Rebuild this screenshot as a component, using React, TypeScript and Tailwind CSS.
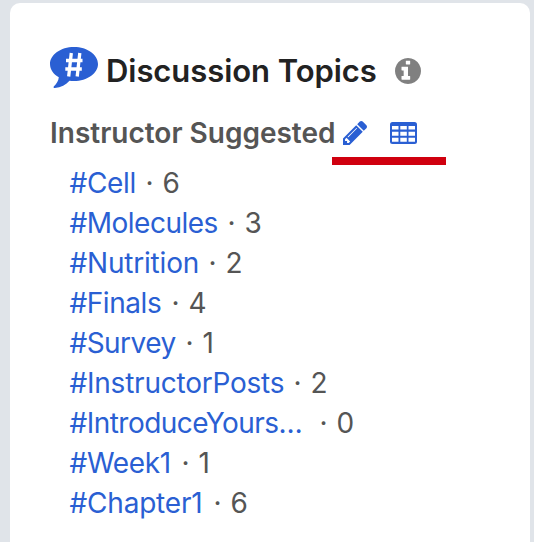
import * as React from "react";

const TOPICS = [
  { tag: "#Cell", count: 6, size: "w-[67px] tracking-[-0.3px]" },
  { tag: "#Molecules", count: 3, size: "w-[149px] tracking-[-0.5px]" },
  { tag: "#Nutrition", count: 2, size: "w-[130px] tracking-[-0.2px]" },
  { tag: "#Finals", count: 4, size: "w-[93px] tracking-[-0.45px]" },
  { tag: "#Survey", count: 1, size: "w-[107px] tracking-[-0.55px]" },
  { tag: "#InstructorPosts", count: 2, size: "w-[215px] tracking-[-0.23px]" },
  { tag: "#IntroduceYours…", count: 0, size: "w-[241px] tracking-[-0.53px]" },
  { tag: "#Week1", count: 1, size: "w-[103px] tracking-[-0.35px]" },
  { tag: "#Chapter1", count: 6, size: "w-[135px] tracking-[-0.2px]" },
];

function HashBubble() {
  return (
    <svg width="48" height="42" viewBox="0 0 48 42" className="shrink-0">
      <path
        fill="#2a5fd3"
        d="M24 0C10.700 0 0 7.600 0 17c0 5.400 3.400 10.200 8.800 13.300C8.500 33.500 6.700 36.700 4 39.200c-.8.800-.4 1.900.8 1.800C11 40.200 16 37.800 19.500 33.700c1.500.2 3 .3 4.500.3 13.300 0 24-7.600 24-17S37.300 0 24 0Z"
      />
      <path
        d="M21.300 6 18.700 29.500M29.800 6 27.200 29.500M16 13.500h16.500M15.300 22h16.500"
        stroke="#fff"
        strokeWidth="3.300"
        fill="none"
      />
    </svg>
  );
}

function InfoIcon() {
  return (
    <svg width="26" height="26" viewBox="128 128 1536 1536" fill="#808080" className="mt-[11px] ml-[18px] shrink-0">
      <path d="M1024 1376v-160q0-14-9-23t-23-9h-96v-512q0-14-9-23t-23-9h-320q-14 0-23 9t-9 23v160q0 14 9 23t23 9h96v320h-96q-14 0-23 9t-9 23v160q0 14 9 23t23 9h448q14 0 23-9t9-23zM1024 480v-160q0-14-9-23t-23-9h-192q-14 0-23 9t-9 23v160q0 14 9 23t23 9h192q14 0 23-9t9-23zM1664 896q0 209-103 385.500t-279.500 279.500-385.500 103-385.500-103-279.500-279.500-103-385.500 103-385.500 279.500-279.500 385.500-103 385.500 103 279.500 279.500 103 385.500z" />
    </svg>
  );
}

function PencilIcon() {
  return (
    <svg width="24" height="24" viewBox="128 149 1515 1515" fill="#2a5fd3" className="ml-[7px] shrink-0">
      <path d="M491 1536l91-91-235-235-91 91v107h128v128h107zm523-928q0-22-22-22-10 0-17 7l-542 542q-7 7-7 17 0 22 22 22 10 0 17-7l542-542q7-7 7-17zm-54-192l416 416-832 832h-416v-416zm683 96q0 53-37 90l-166 166-416-416 166-165q36-38 90-38 53 0 91 38l235 234q37 39 37 91z" />
    </svg>
  );
}

function TableIcon() {
  return (
    <svg width="27" height="22" viewBox="0 0 27 22" className="mb-px ml-[23px] shrink-0">
      <rect width="27" height="22" rx="2.500" fill="#2a5fd3" />
      <path
        d="M2 4h6.500v3.500H2zM10.300 4h6.500v3.500h-6.500zM18.500 4H25v3.500h-6.500zM2 9.700h6.500v4H2zM10.300 9.700h6.500v4h-6.500zM18.500 9.700H25v4h-6.500zM2 15.800h6.500v4H2zM10.300 15.800h6.500v4h-6.500zM18.500 15.800H25v4h-6.500z"
        fill="#fff"
      />
    </svg>
  );
}

export default function App() {
  return (
    <div className="h-[542px] w-[534px] overflow-hidden bg-[#e0e4e9] pt-[3px] pr-1 pl-2.5 font-['Inter',sans-serif]">
      <div className="h-[560px] rounded-[10px] bg-white pl-10">
        <div className="flex h-[88px] pt-11">
          <HashBubble />
          <h1 className="mt-1 ml-2 w-[271px] text-[31px] leading-10 font-semibold tracking-[-0.06px] whitespace-nowrap text-[#222]">
            Discussion Topics
          </h1>
          <InfoIcon />
        </div>
        <div className="mt-[22px] flex h-10 items-center">
          <h2 className="w-[286px] text-[28px] font-semibold whitespace-nowrap text-[#555]">
            Instructor Suggested
          </h2>
          <PencilIcon />
          <TableIcon />
        </div>
        <div className="mt-1 ml-[282px] h-2 w-[114px] bg-[#d0000f]" />
        <ul className="-mt-0.5 pl-[19.5px]">
          {TOPICS.map((t) => (
            <li key={t.tag} className="flex h-10 items-center text-[28px] whitespace-nowrap text-[#555]">
              <a className={`text-[#2a5fd3] ${t.size}`}>{t.tag}</a>
              <span className="w-[26px] text-center">·</span>
              <span>{t.count}</span>
            </li>
          ))}
        </ul>
      </div>
    </div>
  );
}
